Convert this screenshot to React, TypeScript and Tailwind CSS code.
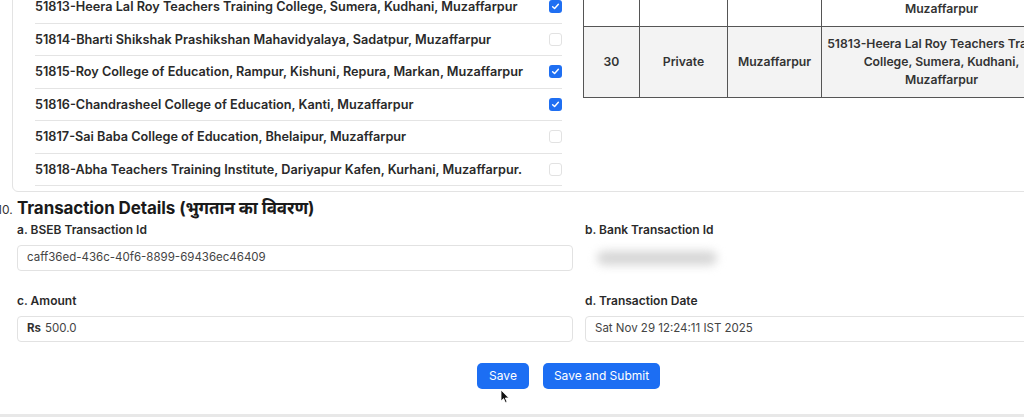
import React from "react";

const rows = [
  { t: "51812-Shree Krishna Teachers Training College, Muzaffarpur", c: true },
  { t: "51813-Heera Lal Roy Teachers Training College, Sumera, Kudhani, Muzaffarpur", c: true },
  { t: "51814-Bharti Shikshak Prashikshan Mahavidyalaya, Sadatpur, Muzaffarpur", c: false },
  { t: "51815-Roy College of Education, Rampur, Kishuni, Repura, Markan, Muzaffarpur", c: true },
  { t: "51816-Chandrasheel College of Education, Kanti, Muzaffarpur", c: true },
  { t: "51817-Sai Baba College of Education, Bhelaipur, Muzaffarpur", c: false },
  { t: "51818-Abha Teachers Training Institute, Dariyapur Kafen, Kurhani, Muzaffarpur.", c: false },
];

function Check({ on }: { on: boolean }) {
  if (on)
    return (
      <span className="w-[13px] h-[13px] rounded-[3px] bg-[#1f6ff2] flex items-center justify-center shrink-0">
        <svg width="9" height="9" viewBox="0 0 10 10" fill="none">
          <path d="M1.8 5.2 L4 7.3 L8.2 2.6" stroke="white" strokeWidth="1.6" strokeLinecap="round" strokeLinejoin="round" />
        </svg>
      </span>
    );
  return <span className="w-[13px] h-[13px] rounded-[3px] border border-[#e2e2e2] bg-white shrink-0" />;
}

const td = "border border-[#555] text-center align-middle px-[5px] py-[8px] leading-[18px] text-[12.2px] font-semibold text-[#333] whitespace-nowrap";

export default function App() {
  return (
    <div className="relative w-[1024px] h-[417px] overflow-hidden bg-white font-[Inter,'Noto_Sans',sans-serif] text-[#212529]">
      {/* top card */}
      <div className="ml-[12px] -mt-[53px] w-[1500px] border border-[#e3e3e3] rounded-[6px] pt-[7px] pb-[5px] pl-[22px] flex items-start gap-[21px] bg-white">
        <div className="w-[527px] pt-[3.5px] shrink-0">
          {rows.map((r) => (
            <div key={r.t} className="h-[32.5px] border-b border-[#e4e4e4] flex items-center justify-between">
              <span className="text-[12.7px] font-semibold text-[#2a2a2a] whitespace-nowrap">{r.t}</span>
              <Check on={r.c} />
            </div>
          ))}
        </div>
        <table className="border-collapse table-fixed w-[598px] shrink-0">
          <colgroup>
            <col className="w-[56px]" />
            <col className="w-[88px]" />
            <col className="w-[94px]" />
            <col className="w-[240px]" />
            <col className="w-[120px]" />
          </colgroup>
          <tbody>
            <tr className="bg-white">
              <td className={td}>29</td>
              <td className={td}>Private</td>
              <td className={td}>Muzaffarpur</td>
              <td className={td}>
                51812-Shree Krishna Teachers Training
                <br />
                College, Bhagwanpur, Kudhani,
                <br />
                Muzaffarpur
              </td>
              <td className={td}>Approved</td>
            </tr>
            <tr className="bg-[#f3f3f3]">
              <td className={td}>30</td>
              <td className={td}>Private</td>
              <td className={td}>Muzaffarpur</td>
              <td className={td}>
                51813-Heera Lal Roy Teachers Training
                <br />
                College, Sumera, Kudhani,
                <br />
                Muzaffarpur
              </td>
              <td className={td}>Approved</td>
            </tr>
          </tbody>
        </table>
      </div>

      {/* transaction section */}
      <div className="pl-[17px] mt-[4px]">
        <h2 className="flex items-baseline h-[24px] leading-[24px]">
          <span className="-ml-[24px] w-[24px] text-[12px] font-normal text-[#333] pl-[4px]">10.</span>
          <span className="text-[17px] font-bold tracking-[-0.1px] text-[#1a1a1a]">
            Transaction Details (भुगतान का विवरण)
          </span>
        </h2>
        <div className="grid grid-cols-[556px_556px] gap-x-[12px] gap-y-[22px] mt-[2px]">
          <div>
            <div className="text-[12px] font-semibold leading-[16px] text-[#2a2a2a]">a. BSEB Transaction Id</div>
            <div className="mt-[7px] h-[26px] border border-[#e2e2e2] rounded-[4px] px-[9px] flex items-center text-[11.5px] text-[#444]">
              caff36ed-436c-40f6-8899-69436ec46409
            </div>
          </div>
          <div>
            <div className="text-[12px] font-semibold leading-[16px] text-[#2a2a2a]">b. Bank Transaction Id</div>
            <div className="mt-[7px] h-[26px] flex items-center pl-[12px]">
              <div className="w-[120px] h-[14px] rounded-full bg-[#d6d6d6] blur-[5px]" />
            </div>
          </div>
          <div>
            <div className="text-[12px] font-semibold leading-[16px] text-[#2a2a2a]">c. Amount</div>
            <div className="mt-[7px] h-[26px] border border-[#e2e2e2] rounded-[4px] px-[9px] flex items-center text-[11.5px] text-[#444]">
              <span className="font-bold text-[#333] mr-[4px]">Rs</span>500.0
            </div>
          </div>
          <div>
            <div className="text-[12px] font-semibold leading-[16px] text-[#2a2a2a]">d. Transaction Date</div>
            <div className="mt-[7px] h-[26px] border border-[#e2e2e2] rounded-[4px] px-[9px] flex items-center text-[11.5px] text-[#444]">
              Sat Nov 29 12:24:11 IST 2025
            </div>
          </div>
        </div>
      </div>

      <div className="w-[1137px] flex justify-center gap-[14px] mt-[21px]">
        <button className="relative h-[26px] w-[52px] rounded-[5px] bg-[#1c6ef3] text-white text-[12px]">
          Save
          <svg className="absolute left-[23px] top-[26px]" width="10" height="15" viewBox="0 0 10 15">
            <path d="M1 1 L1 12 L3.6 9.6 L5.4 13.6 L7 12.9 L5.3 9 L8.8 9 Z" fill="#111" stroke="white" strokeWidth="0.8" />
          </svg>
        </button>
        <button className="h-[26px] w-[117px] rounded-[5px] bg-[#1c6ef3] text-white text-[12px]">Save and Submit</button>
      </div>

      <div className="mt-[25px] border-t-[3px] border-[#e8e8e8]" />
    </div>
  );
}
